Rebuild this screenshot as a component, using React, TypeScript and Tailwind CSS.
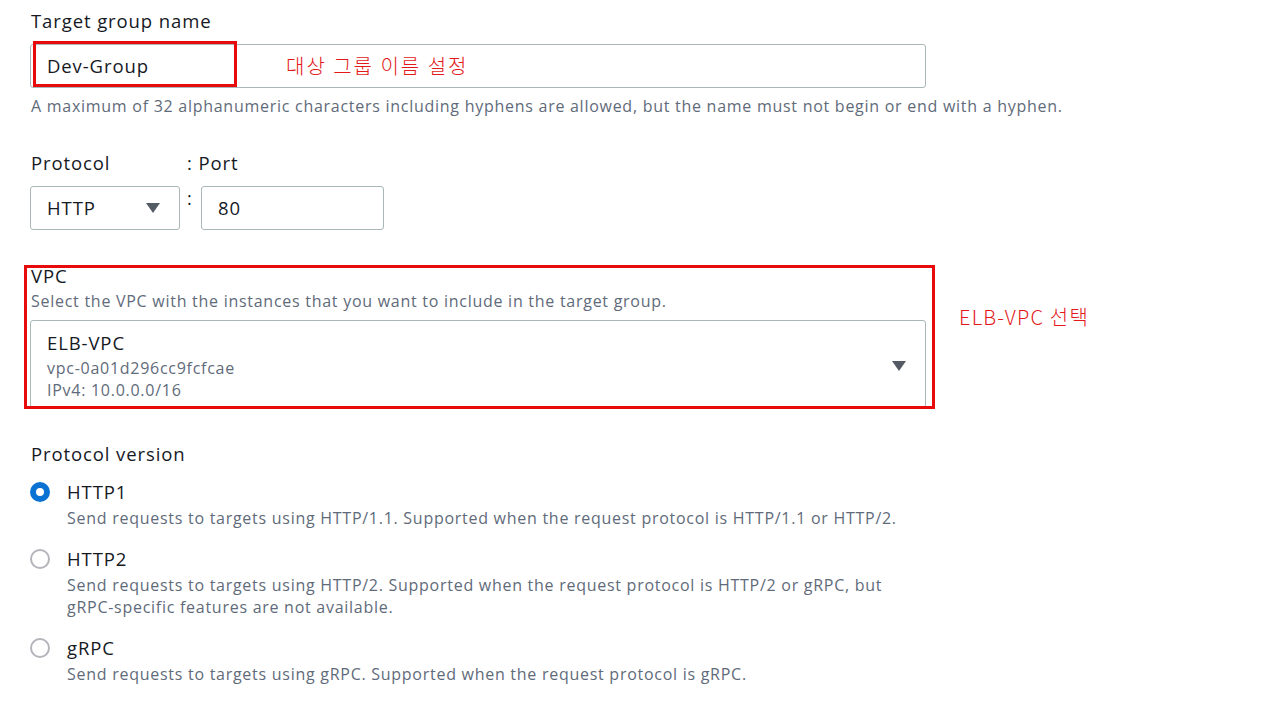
import type { ReactNode } from 'react';

/* Form fonts: AWS console look-alike, Korean notes in a CJK face. */
const ui = "font-['Open_Sans','Noto_Sans',Arial,sans-serif]";
const note = "font-['Noto_Sans_CJK_KR','Liberation_Sans',sans-serif] font-light";
const big = 'text-[18.5px] tracking-[0.9px]';
const small = 'text-[16px] tracking-[0.73px]';

function Caret() {
  return (
    <svg width="14" height="10" viewBox="0 0 14 10" className="shrink-0">
      <path d="M0 0h14L7 10z" fill="#545b64" />
    </svg>
  );
}

function Radio({ checked, label, children }: { checked?: boolean; label: string; children: ReactNode }) {
  return (
    <div className="flex">
      <div className="w-[37px] shrink-0 pt-[3px]">
        {checked ? (
          <div className="flex h-5 w-5 items-center justify-center rounded-full bg-[#0972d3]">
            <div className="h-[8px] w-[8px] rounded-full bg-white" />
          </div>
        ) : (
          <div className="h-5 w-5 rounded-full border-2 border-[#b4b4bb] bg-white" />
        )}
      </div>
      <div>
        <p className={`${big} leading-[26px] text-[#16191f]`}>{label}</p>
        <p className={`${small} mt-[2px] leading-[22px] text-[#5f6b7a]`}>{children}</p>
      </div>
    </div>
  );
}

export default function App() {
  return (
    <div className={`${ui} min-h-[713px] bg-white pl-[30px] pt-[8px] text-[#16191f]`}>
      {/* Target group name */}
      <p className={`${big} pl-px leading-[26px]`}>Target group name</p>
      <div className="relative mt-[10px] flex h-[44px] w-[896px] items-center rounded-[3px] border border-[#aab7b8] pl-[16px]">
        <span className={`${big} w-[239px]`}>Dev-Group</span>
        <span className={`${note} text-[20px] tracking-[2px] text-[#e31818]`}>대상 그룹 이름 설정</span>
        <div className="absolute left-[2px] top-[-4px] h-[46px] w-[204px] border-[3px] border-[#e80b0b]" />
      </div>
      <p className={`${small} mt-[7px] pl-px leading-[22px] text-[#5f6b7a]`}>
        A maximum of 32 alphanumeric characters including hyphens are allowed, but the name must not begin or end with a hyphen.
      </p>

      {/* Protocol and port */}
      <div className={`${big} mt-[33px] flex leading-[26px]`}>
        <span className="w-[157px] pl-px">Protocol</span>
        <span>: Port</span>
      </div>
      <div className="mt-[10px] flex">
        <div className={`${big} flex h-[44px] w-[150px] items-center justify-between rounded-[3px] border border-[#aab7b8] pl-[16px] pr-[19px]`}>
          <span>HTTP</span>
          <Caret />
        </div>
        <span className="w-[21px] pl-[7px] text-[18px] leading-[24px]">:</span>
        <div className={`${big} flex h-[44px] w-[183px] items-center rounded-[3px] border border-[#aab7b8] pl-[16px]`}>80</div>
      </div>

      {/* VPC */}
      <div className="flex items-start">
        <div className="relative mt-[33px] w-[896px]">
          <p className={`${big} pl-px leading-[26px]`}>VPC</p>
          <p className={`${small} mt-px pl-px leading-[22px] text-[#5f6b7a]`}>
            Select the VPC with the instances that you want to include in the target group.
          </p>
          <div className="mt-[8px] flex items-center justify-between rounded-[3px] border border-[#aab7b8] pb-[6px] pl-[16px] pr-[19px] pt-[10px]">
            <div>
              <p className={`${big} leading-[24px]`}>ELB-VPC</p>
              <p className={`${small} mt-[2px] leading-[22px] text-[#5f6b7a]`}>vpc-0a01d296cc9fcfcae</p>
              <p className={`${small} leading-[22px] text-[#5f6b7a]`}>IPv4: 10.0.0.0/16</p>
            </div>
            <Caret />
          </div>
          <div className="absolute left-[-6px] top-[2px] h-[144px] w-[911px] border-[3px] border-[#e80b0b]" />
        </div>
        <span className={`${note} ml-[33px] mt-[74px] text-[20px] leading-[26px] tracking-[1.2px] text-[#e31818]`}>ELB-VPC 선택</span>
      </div>

      {/* Protocol version */}
      <p className={`${big} mt-[33px] pl-px leading-[26px]`}>Protocol version</p>
      <div className="mt-[12px] flex flex-col gap-[17px]">
        <Radio checked label="HTTP1">
          Send requests to targets using HTTP/1.1. Supported when the request protocol is HTTP/1.1 or HTTP/2.
        </Radio>
        <Radio label="HTTP2">
          Send requests to targets using HTTP/2. Supported when the request protocol is HTTP/2 or gRPC, but
          <br />
          gRPC-specific features are not available.
        </Radio>
        <Radio label="gRPC">
          Send requests to targets using gRPC. Supported when the request protocol is gRPC.
        </Radio>
      </div>
    </div>
  );
}
